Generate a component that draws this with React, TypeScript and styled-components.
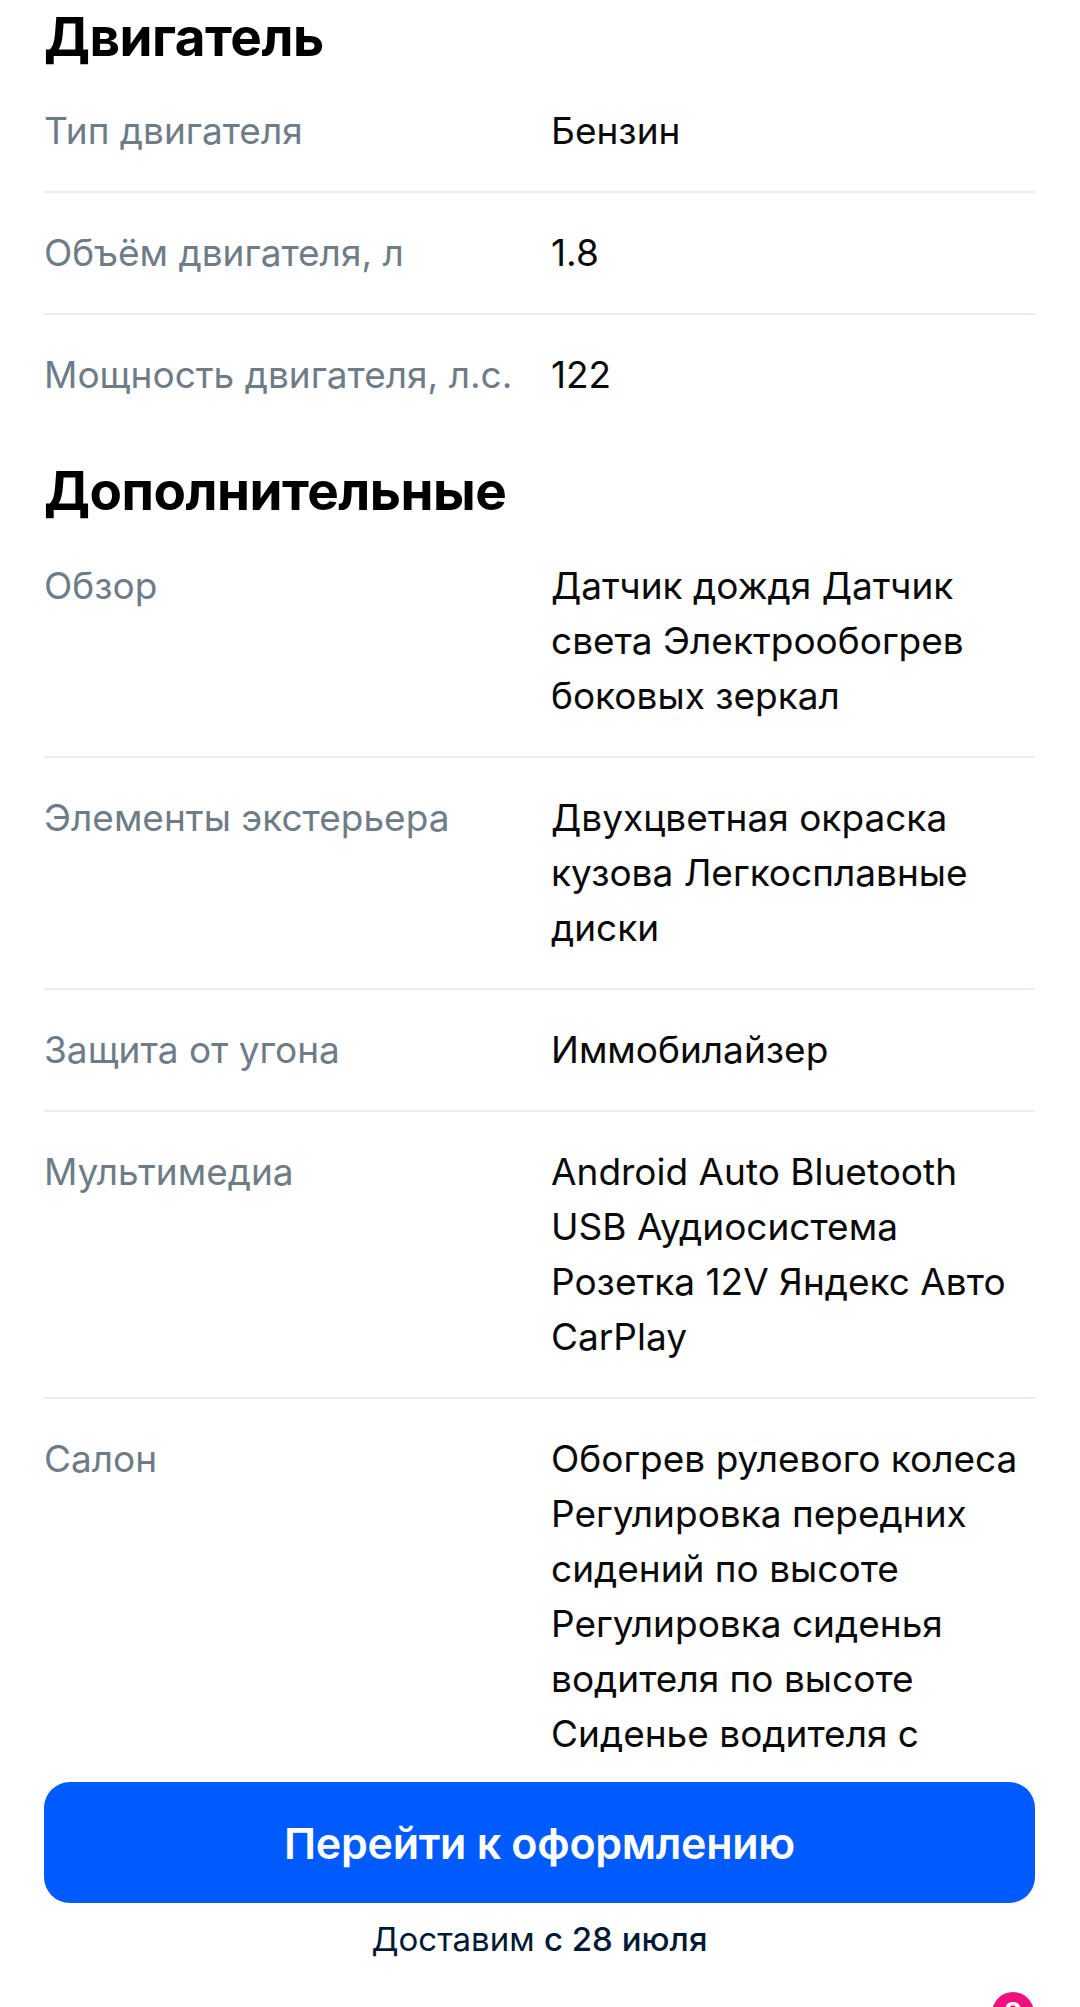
import styled, { createGlobalStyle } from "styled-components";

type Spec = {
  label: string;
  lines: string[];
};

type Section = {
  title: string;
  rows: Spec[];
};

const sections: Section[] = [
  {
    title: "Двигатель",
    rows: [
      { label: "Тип двигателя", lines: ["Бензин"] },
      { label: "Объём двигателя, л", lines: ["1.8"] },
      { label: "Мощность двигателя, л.с.", lines: ["122"] },
    ],
  },
  {
    title: "Дополнительные",
    rows: [
      {
        label: "Обзор",
        lines: ["Датчик дождя Датчик", "света Электрообогрев", "боковых зеркал"],
      },
      {
        label: "Элементы экстерьера",
        lines: ["Двухцветная окраска", "кузова Легкосплавные", "диски"],
      },
      { label: "Защита от угона", lines: ["Иммобилайзер"] },
      {
        label: "Мультимедиа",
        lines: [
          "Android Auto Bluetooth",
          "USB Аудиосистема",
          "Розетка 12V Яндекс Авто",
          "CarPlay",
        ],
      },
      {
        label: "Салон",
        lines: [
          "Обогрев рулевого колеса",
          "Регулировка передних",
          "сидений по высоте",
          "Регулировка сиденья",
          "водителя по высоте",
          "Сиденье водителя с",
        ],
      },
    ],
  },
];

const GlobalStyle = createGlobalStyle`
  html, body {
    margin: 0;
    padding: 0;
    background: #ffffff;
  }
  body {
    font-family: Inter, "Noto Sans", sans-serif;
    -webkit-font-smoothing: antialiased;
  }
`;

// простые серые иконки нижней навигации, видна только верхушка
const NavIcon = ({ kind }: { kind: number }) => (
  <svg width="52" height="52" viewBox="0 0 24 24" fill="none" stroke="#aab2ba" strokeWidth="2">
    {kind === 0 && <path d="M3 11l9-8 9 8v10H3z" />}
    {kind === 1 && <rect x="3" y="3" width="18" height="18" rx="4" />}
    {kind === 2 && <path d="M4 7h16M4 12h16M4 17h16" />}
    {kind === 3 && <path d="M12 21s-8-5-8-11a4.5 4.5 0 0 1 8-2.8A4.5 4.5 0 0 1 20 10c0 6-8 11-8 11z" />}
    {kind === 4 && <path d="M3 4h3l2 12h12l2-9H7" />}
  </svg>
);

const App = () => {
  return (
    <>
      <GlobalStyle />
      <S.Page>
        {sections.map((section, i) => (
          <S.Section key={section.title}>
            <S.Heading $first={i === 0}>{section.title}</S.Heading>
            {section.rows.map((row, index) => (
              <S.Row key={row.label} $divider={index < section.rows.length - 1}>
                <S.Label>{row.label}</S.Label>
                <S.Value>
                  {row.lines.map((line) => (
                    <S.Line key={line}>{line}</S.Line>
                  ))}
                </S.Value>
              </S.Row>
            ))}
          </S.Section>
        ))}
      </S.Page>
      <S.BottomPanel>
        <S.CheckoutButton type="button">Перейти к оформлению</S.CheckoutButton>
        <S.Delivery>
          Доставим <b>с 28 июля</b>
        </S.Delivery>
        <S.Nav>
          {[0, 1, 2, 3, 4].map((kind) => (
            <S.NavItem key={kind}>
              <NavIcon kind={kind} />
              {kind === 4 && <S.Badge>2</S.Badge>}
            </S.NavItem>
          ))}
        </S.Nav>
      </S.BottomPanel>
    </>
  );
};
export default App;

const Page = styled.main`
  height: 100vh;
  overflow: hidden;
  padding: 0 45px 0 44px;
  box-sizing: border-box;
`;

const Section = styled.section`
  display: flex;
  flex-direction: column;
`;

const Heading = styled.h2<{ $first?: boolean }>`
  margin: ${({ $first }) => ($first ? "7px 0 3px" : "25px 0 4px")};
  font-size: 53px;
  line-height: 60px;
  font-weight: 700;
  letter-spacing: -0.5px;
  color: #000000;
`;

const Row = styled.div<{ $divider: boolean }>`
  display: grid;
  grid-template-columns: 507px 1fr;
  padding: 33px 0;
  border-bottom: 2px solid ${({ $divider }) => ($divider ? "#eaedf0" : "transparent")};
  margin-bottom: -1px;
`;

const Label = styled.div`
  font-size: 37px;
  line-height: 55px;
  color: #6e7c88;
  white-space: nowrap;
`;

const Value = styled.div`
  display: flex;
  flex-direction: column;
  font-size: 37px;
  line-height: 55px;
  color: #0a0a0a;
`;

const Line = styled.span`
  white-space: nowrap;
`;

const BottomPanel = styled.footer`
  position: fixed;
  left: 0;
  right: 0;
  bottom: 0;
  height: 255px;
  background: #ffffff;
  display: flex;
  flex-direction: column;
  padding: 30px 45px 0 44px;
  box-sizing: border-box;
  overflow: hidden;
`;

const CheckoutButton = styled.button`
  flex-shrink: 0;
  height: 121px;
  border: none;
  border-radius: 26px;
  background: #005bff;
  color: #ffffff;
  font-family: Inter, "Noto Sans", sans-serif;
  font-size: 43px;
  font-weight: 600;
  letter-spacing: -0.3px;
`;

const Delivery = styled.div`
  flex-shrink: 0;
  margin-top: 14px;
  text-align: center;
  font-size: 33px;
  line-height: 44px;
  color: #001a34;

  b {
    font-weight: 500;
  }
`;

const Nav = styled.nav`
  flex-shrink: 0;
  margin: 31px -45px 0 -44px;
  display: grid;
  grid-template-columns: repeat(5, 1fr);
`;

const NavItem = styled.div`
  position: relative;
  display: flex;
  justify-content: center;
  padding-top: 12px;
`;

const Badge = styled.span`
  position: absolute;
  top: 0;
  left: calc(50% + 20px);
  width: 42px;
  height: 42px;
  border-radius: 50%;
  background: #f1117e;
  color: #ffffff;
  font-size: 28px;
  font-weight: 700;
  display: flex;
  align-items: center;
  justify-content: center;
`;

const S = {
  Page,
  Section,
  Heading,
  Row,
  Label,
  Value,
  Line,
  BottomPanel,
  CheckoutButton,
  Delivery,
  Nav,
  NavItem,
  Badge,
};
